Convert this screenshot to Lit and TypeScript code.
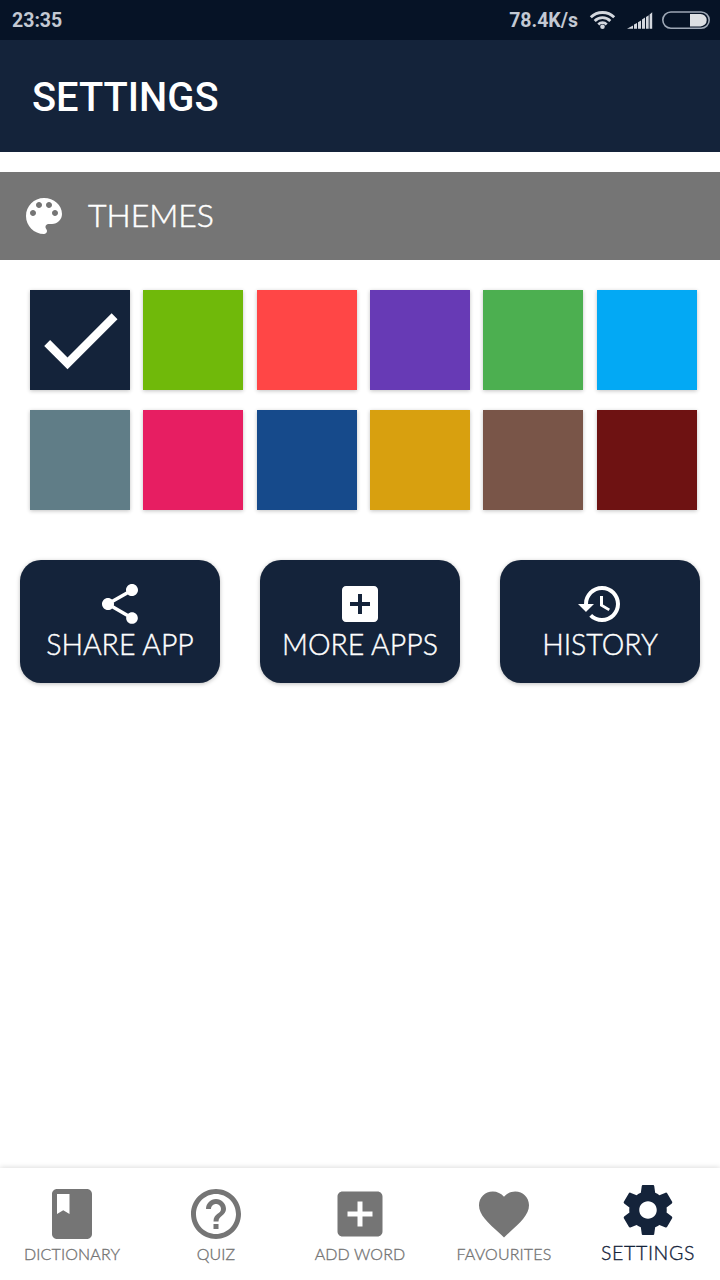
import { LitElement, html, css, svg } from "lit";
import { customElement, property } from "lit/decorators.js";
import { classMap } from "lit/directives/class-map.js";

const ICONS: Record<string, string> = {
  palette:
    "M12 3c-4.97 0-9 4.03-9 9s4.03 9 9 9c.83 0 1.5-.67 1.5-1.5 0-.39-.15-.74-.39-1.01-.23-.26-.38-.61-.38-.99 0-.83.67-1.5 1.5-1.5H16c2.76 0 5-2.24 5-5 0-4.42-4.03-8-9-8zm-5.5 9c-.83 0-1.5-.67-1.5-1.5S5.67 9 6.5 9 8 9.67 8 10.5 7.33 12 6.5 12zm3-4C8.67 8 8 7.33 8 6.5S8.67 5 9.5 5s1.5.67 1.5 1.5S10.33 8 9.5 8zm5 0c-.83 0-1.5-.67-1.5-1.5S13.67 5 14.5 5s1.5.67 1.5 1.5S15.33 8 14.5 8zm3 4c-.83 0-1.5-.67-1.5-1.5S16.67 9 17.5 9s1.5.67 1.5 1.5-.67 1.5-1.5 1.5z",
  check: "M9 16.17L4.83 12l-1.42 1.41L9 19 21 7l-1.41-1.41z",
  share:
    "M18 16.08c-.76 0-1.44.3-1.96.77L8.91 12.7c.05-.23.09-.46.09-.7s-.04-.47-.09-.7l7.05-4.11c.54.5 1.25.81 2.04.81 1.66 0 3-1.34 3-3s-1.34-3-3-3-3 1.34-3 3c0 .24.04.47.09.7L8.04 9.81C7.5 9.31 6.79 9 6 9c-1.66 0-3 1.34-3 3s1.34 3 3 3c.79 0 1.5-.31 2.04-.81l7.12 4.16c-.05.21-.08.43-.08.65 0 1.61 1.31 2.92 2.92 2.92s2.92-1.31 2.92-2.92-1.31-2.92-2.92-2.92z",
  add: "M19 3H5c-1.11 0-2 .9-2 2v14c0 1.1.89 2 2 2h14c1.1 0 2-.9 2-2V5c0-1.1-.9-2-2-2zm-2 10h-4v4h-2v-4H7v-2h4V7h2v4h4v2z",
  history:
    "M13 3c-4.97 0-9 4.03-9 9H1l3.89 3.89.07.14L9 12H6c0-3.87 3.13-7 7-7s7 3.13 7 7-3.13 7-7 7c-1.93 0-3.68-.79-4.94-2.06l-1.42 1.42C8.27 19.99 10.51 21 13 21c4.97 0 9-4.03 9-9s-4.03-9-9-9zm-1 5v5l4.28 2.54.72-1.21-3.5-2.08V8H12z",
  book: "M18 2H6c-1.1 0-2 .9-2 2v16c0 1.1.9 2 2 2h12c1.1 0 2-.9 2-2V4c0-1.1-.9-2-2-2zM6 4h5v8l-2.5-1.5L6 12V4z",
  help: "M11 18h2v-2h-2v2zm1-16C6.48 2 2 6.48 2 12s4.48 10 10 10 10-4.48 10-10S17.52 2 12 2zm0 18c-4.41 0-8-3.59-8-8s3.59-8 8-8 8 3.59 8 8-3.59 8-8 8zm0-14c-2.21 0-4 1.79-4 4h2c0-1.1.9-2 2-2s2 .9 2 2c0 2-3 1.75-3 5h2c0-2.25 3-2.5 3-5 0-2.21-1.79-4-4-4z",
  heart:
    "M12 21.35l-1.45-1.32C5.4 15.36 2 12.28 2 8.5 2 5.42 4.42 3 7.5 3c1.74 0 3.41.81 4.5 2.09C13.09 3.81 14.76 3 16.5 3 19.58 3 22 5.42 22 8.5c0 3.78-3.4 6.86-8.55 11.54L12 21.35z",
  gear: "M19.43 12.98c.04-.32.07-.64.07-.98s-.03-.66-.07-.98l2.11-1.65c.19-.15.24-.42.12-.64l-2-3.46c-.12-.22-.39-.3-.61-.22l-2.49 1c-.52-.4-1.08-.73-1.69-.98l-.38-2.65C14.46 2.18 14.25 2 14 2h-4c-.25 0-.46.18-.49.42l-.38 2.65c-.61.25-1.17.59-1.69.98l-2.49-1c-.23-.09-.49 0-.61.22l-2 3.46c-.13.22-.07.49.12.64l2.11 1.65c-.04.32-.07.65-.07.98s.03.66.07.98l-2.11 1.65c-.19.15-.24.42-.12.64l2 3.46c.12.22.39.3.61.22l2.49-1c.52.4 1.08.73 1.69.98l.38 2.65c.03.24.24.42.49.42h4c.25 0 .46-.18.49-.42l.38-2.65c.61-.25 1.17-.59 1.69-.98l2.49 1c.23.09.49 0 .61-.22l2-3.46c.12-.22.07-.49-.12-.64l-2.11-1.65zM12 15.5c-1.93 0-3.5-1.57-3.5-3.5s1.57-3.5 3.5-3.5 3.5 1.57 3.5 3.5-1.57 3.5-3.5 3.5z",
};

@customElement("md-icon")
class MdIcon extends LitElement {
  @property() name = "";
  static styles = css`
    :host { display: block; flex: none; width: 48px; height: 48px; }
    .glyph { display: block; width: 100%; height: 100%; fill: currentColor; }
  `;
  render() {
    return html`<svg class="glyph" viewBox="0 0 24 24">${svg`<path d=${ICONS[this.name]}></path>`}</svg>`;
  }
}

@customElement("status-bar")
class StatusBar extends LitElement {
  static styles = css`
    :host {
      display: flex; align-items: center; height: 40px; box-sizing: border-box;
      padding: 0 10px 0 12px; background: #061326; color: #c3c9d3;
      font: 700 19.5px/40px Roboto, sans-serif;
    }
    .clock { flex: 1; padding-top: 1px; }
    .speed { margin-right: 11px; padding-top: 1px; }
    .icons { display: block; }
  `;
  render() {
    return html`
      <span class="clock">23:35</span>
      <span class="speed">78.4K/s</span>
      <svg class="icons" width="121" height="40" viewBox="589 0 121 40">
        <g fill="none" stroke="#d3d7de" stroke-width="2.8">
          <path d="M590.8 17.3a16.6 16.6 0 0 1 23.4 0"></path>
          <path d="M594.7 20.9a11.1 11.1 0 0 1 15.6 0"></path>
          <path d="M598.3 24.4a6 6 0 0 1 8.4 0"></path>
        </g>
        <circle cx="602.5" cy="26.7" r="2.3" fill="#d3d7de"></circle>
        <path fill="#d3d7de" d="M627 28.8l6-3.4v3.400zM634 24.600l3-1.700v5.900h-3zM638 22.200l3-1.800v8.400h-3zM642 19.600l3-2v11.200h-3zM646 17l2.700-1.800v13.600h-2.700zM649.600 14.600l2.600-2.400v16.600h-2.600z"></path>
        <rect x="662.800" y="12" width="46.400" height="16.200" rx="8.100" fill="none" stroke="#9da7b5" stroke-width="1.600"></rect>
        <path fill="#dcdfe3" d="M690 14h10.500a6.200 6.200 0 0 1 0 12.400H690z"></path>
      </svg>
    `;
  }
}

const SWATCHES = [
  "#14233a", "#70b90a", "#ff4646", "#673ab5", "#4caf50", "#03a9f4",
  "#607d87", "#e71e62", "#164a8b", "#d8a00f", "#795548", "#6e1212",
];

const ACTIONS = [
  { icon: "share", label: "SHARE APP", cls: "share" },
  { icon: "add", label: "MORE APPS", cls: "more" },
  { icon: "history", label: "HISTORY", cls: "history" },
];

const TABS = [
  { icon: "book", label: "DICTIONARY", cls: "dictionary" },
  { icon: "help", label: "QUIZ", cls: "quiz" },
  { icon: "add", label: "ADD WORD", cls: "word" },
  { icon: "heart", label: "FAVOURITES", cls: "favourites" },
  { icon: "gear", label: "SETTINGS", cls: "active" },
];

@customElement("app-root")
class AppRoot extends LitElement {
  static styles = css`
    :host {
      display: flex; flex-direction: column; width: 720px; height: 1280px;
      background: #fff; overflow: hidden; font-family: Lato, sans-serif;
    }
    .header {
      height: 112px; box-sizing: border-box; padding: 2px 32px 0; background: #14233a;
      color: #fff; font: 500 39.8px/112px Roboto, sans-serif;
    }
    .section {
      display: flex; align-items: center; gap: 20px; height: 88px; margin-top: 20px;
      padding-left: 20px; background: #757575; color: #fff;
    }
    .section-title {
      font-size: 32px; line-height: 40px; font-weight: 300; padding-bottom: 3px;
      -webkit-text-stroke: 0.5px currentColor;
    }
    .swatches {
      display: grid; grid-template-columns: repeat(6, 1fr); row-gap: 20px;
      padding: 30px 20px 0;
    }
    .swatch {
      width: 100px; height: 100px; margin-left: 10px; color: #fff;
      box-shadow: 0 1px 4px rgba(0, 0, 0, 0.24);
    }
    .tick { width: 100px; height: 100px; }
    .actions { display: flex; gap: 40px; padding: 50px 20px 0; }
    .action {
      display: flex; flex-direction: column; align-items: center; box-sizing: border-box;
      width: 200px; height: 123px; padding-top: 20px; border-radius: 21px;
      background: #14233a; color: #fff; box-shadow: 0 1px 4px rgba(0, 0, 0, 0.26);
    }
    .action-label {
      font-size: 28.5px; line-height: 32px; font-weight: 300; white-space: nowrap;
      -webkit-text-stroke: 0.4px currentColor;
    }
    .nav {
      display: flex; margin-top: auto; height: 112px; background: #fff; color: #757575;
      box-shadow: 0 -1px 5px rgba(0, 0, 0, 0.13);
    }
    .tab { display: flex; flex-direction: column; align-items: center; flex: 1; padding-top: 16px; }
    .tab-icon { width: 60px; height: 60px; }
    .tab-label {
      font-size: 16px; line-height: 20px; font-weight: 300; letter-spacing: 0.15px;
      white-space: nowrap; -webkit-text-stroke: 0.35px currentColor;
    }
    .active { padding-top: 12px; color: #14233a; }
    .active .tab-label { font-size: 19.5px; line-height: 26px; letter-spacing: 0.65px; }
  `;
  render() {
    return html`
      <status-bar></status-bar>
      <div class="header">SETTINGS</div>
      <div class="section">
        <md-icon name="palette"></md-icon>
        <span class="section-title">THEMES</span>
      </div>
      <div class="swatches">
        ${SWATCHES.map(
          (color, i) => html`<div class="swatch" style="background:${color}">
            ${i === 0 ? html`<md-icon class="tick" name="check"></md-icon>` : ""}
          </div>`
        )}
      </div>
      <div class="actions">
        ${ACTIONS.map(
          (a) => html`<div class=${classMap({ action: true, [a.cls]: true })}>
            <md-icon name=${a.icon}></md-icon>
            <span class="action-label">${a.label}</span>
          </div>`
        )}
      </div>
      <div class="nav">
        ${TABS.map(
          (t) => html`<div class=${classMap({ tab: true, [t.cls]: true })}>
            <md-icon class="tab-icon" name=${t.icon}></md-icon>
            <span class="tab-label">${t.label}</span>
          </div>`
        )}
      </div>
    `;
  }
}
